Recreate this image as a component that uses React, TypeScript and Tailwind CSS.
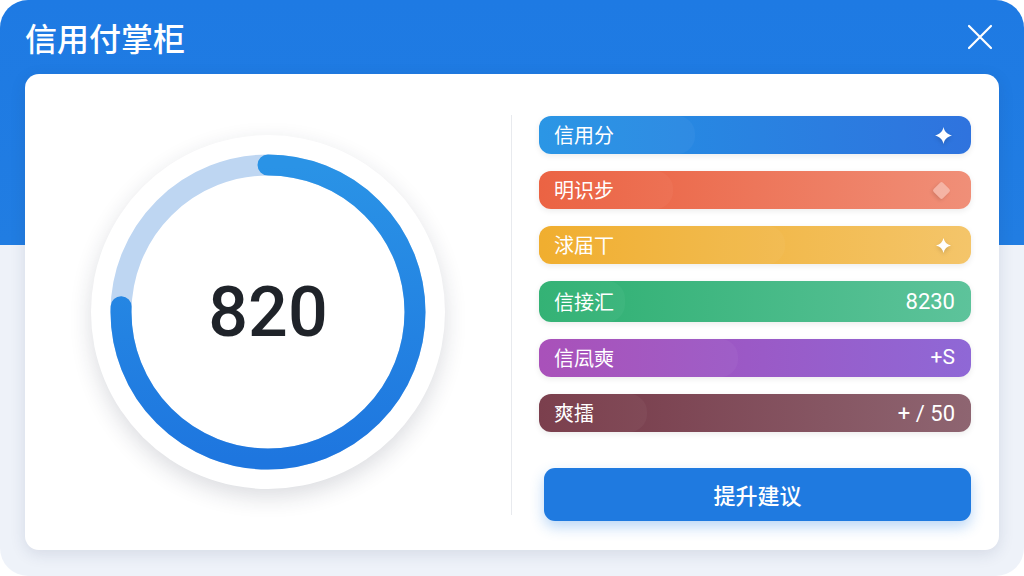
import React from "react";

const CJK = "font-['Noto_Sans_CJK_SC','Noto_Sans',sans-serif]";

type Row = {
  label: string;
  bg: string;
  h: string;
  right: React.ReactNode;
  sheen: string;
};

function Sparkle({ size = 17 }: { size?: number }) {
  return (
    <svg width={size} height={size} viewBox="0 0 20 20" className="drop-shadow-[0_2px_2px_rgba(0,0,0,0.15)]">
      <path d="M10 0 C11.2 5.5 14.5 8.6 20 10 C14.5 11.4 11.2 14.5 10 20 C8.8 14.5 5.5 11.4 0 10 C5.5 8.6 8.8 5.5 10 0 Z" fill="white" />
    </svg>
  );
}

const rows: Row[] = [
  {
    label: "信用分",
    bg: "bg-[linear-gradient(90deg,#2392e4,#2f73de)]",
    h: "h-[38px]",
    sheen: "w-[36%]",
    right: <span className="mr-[3px] flex"><Sparkle /></span>,
  },
  {
    label: "明识步",
    bg: "bg-[linear-gradient(90deg,#ea5d3c,#f08f78)]",
    h: "h-[38px]",
    sheen: "w-[31%]",
    right: (
      <span className="mr-[7px] block h-[13px] w-[13px] rotate-45 rounded-[2px] bg-white/35 shadow-[0_2px_4px_rgba(0,0,0,0.12)]" />
    ),
  },
  {
    label: "浗届丅",
    bg: "bg-[linear-gradient(90deg,#efab28,#f4c56a)]",
    h: "h-[38px]",
    sheen: "w-[57%]",
    right: <span className="mr-[4px] flex"><Sparkle size={15} /></span>,
  },
  {
    label: "信接汇",
    bg: "bg-[linear-gradient(90deg,#2daf70,#5dc39b)]",
    h: "h-[41px]",
    sheen: "w-[20%]",
    right: <span className="font-['Roboto',sans-serif] text-[22px]">8230</span>,
  },
  {
    label: "信凨奭",
    bg: "bg-[linear-gradient(90deg,#a64bb7,#8f68d6)]",
    h: "h-[38px]",
    sheen: "w-[46%]",
    right: <span className="font-['Roboto',sans-serif] text-[21px]">+S</span>,
  },
  {
    label: "爽擂",
    bg: "bg-[linear-gradient(90deg,#763847,#8e6571)]",
    h: "h-[38px]",
    sheen: "w-[25%]",
    right: <span className="font-['Roboto',sans-serif] text-[22px]">+ / 50</span>,
  },
];

function Gauge() {
  const r = 147;
  const c = 2 * Math.PI * r;
  const arc = (272 / 360) * c;
  return (
    <div className="flex h-[354px] w-[354px] items-center justify-center rounded-full bg-white shadow-[0_8px_22px_rgba(30,40,60,0.16)]">
      <div className="relative h-[354px] w-[354px]">
        <svg width="354" height="354" viewBox="0 0 354 354">
          <defs>
            {/* circle is rotated -90deg, so x1->x2 reversed runs top to bottom on screen */}
            <linearGradient id="arcGrad" x1="1" y1="0" x2="0" y2="0">
              <stop offset="0%" stopColor="#2a93e6" />
              <stop offset="100%" stopColor="#1e76df" />
            </linearGradient>
          </defs>
          <circle cx="177" cy="177" r={r} fill="none" stroke="#bed6f2" strokeWidth="21" />
          <circle
            cx="177"
            cy="177"
            r={r}
            fill="none"
            stroke="url(#arcGrad)"
            strokeWidth="21"
            strokeLinecap="round"
            strokeDasharray={`${arc} ${c}`}
            transform="rotate(-90 177 177)"
          />
        </svg>
        <div className="absolute inset-0 flex items-center justify-center">
          <span className="font-['Roboto',sans-serif] text-[70px] font-medium text-[#1f2329]">820</span>
        </div>
      </div>
    </div>
  );
}

export default function App() {
  return (
    <div className="h-[576px] w-[1024px] overflow-hidden bg-white">
      <div
        className={`flex h-[576px] w-[1024px] flex-col overflow-hidden rounded-[28px] bg-[linear-gradient(to_bottom,#1e7ae3_0,#217de2_245px,#eef2f9_245px)] px-[25px] ${CJK}`}
      >
        {/* header */}
        <div className="flex h-[74px] shrink-0 items-center justify-between pr-[6px]">
          <h1 className="text-[32px] font-medium leading-none text-white">信用付掌柜</h1>
          <svg width="26" height="26" viewBox="0 0 26 26">
            <path d="M2 2 L24 24 M24 2 L2 24" stroke="white" strokeWidth="2.2" strokeLinecap="round" />
          </svg>
        </div>

        {/* card */}
        <div className="mb-[26px] flex flex-1 rounded-[14px] bg-white shadow-[0_4px_16px_rgba(30,50,90,0.12)]">
          <div className="flex w-[486px] items-center justify-center">
            <Gauge />
          </div>

          <div className="my-[41px] mb-[35px] w-px bg-[#e8eaee]" />

          <div className="flex flex-1 flex-col pl-[27px] pr-[28px] pt-[42px]">
            <div className="flex flex-col gap-[17px]">
              {rows.map((row) => (
                <div
                  key={row.label}
                  className={`relative flex ${row.h} items-center justify-between overflow-hidden rounded-[12px] ${row.bg} pl-[15px] pr-[16px] text-white shadow-[0_2px_6px_rgba(0,0,0,0.08)]`}
                >
                  <div className={`absolute inset-y-0 left-0 ${row.sheen} rounded-r-[18px] bg-white/[0.035]`} />
                  <span className="relative text-[20px] leading-none">{row.label}</span>
                  <span className="relative flex items-center">{row.right}</span>
                </div>
              ))}
            </div>

            <button className="ml-[5px] mt-[36px] flex h-[53px] items-center justify-center rounded-[11px] bg-[#1f7ae0] text-[22px] font-medium text-white shadow-[0_6px_14px_rgba(31,122,224,0.3)]">
              提升建议
            </button>
          </div>
        </div>
      </div>
    </div>
  );
}
